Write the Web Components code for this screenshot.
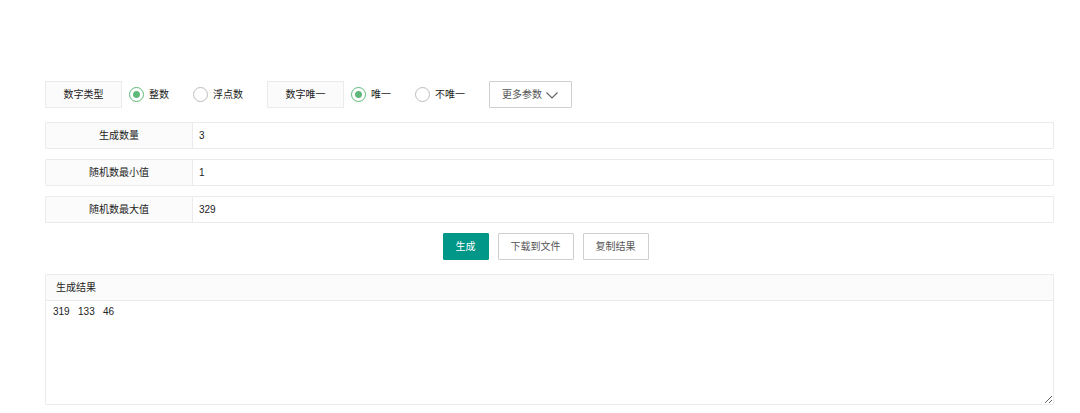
<!DOCTYPE html>
<html lang="zh-CN">
<head>
<meta charset="utf-8">
<title>随机数生成</title>
<style>
  body {
    margin: 0;
    background: #fff;
    color: #222;
    font: 10px/16px "Liberation Sans", "Noto Sans CJK SC", sans-serif;
  }
</style>
</head>
<body>
<random-page></random-page>

<template id="random-page">
  <style>
    :host { display: block; padding: 81px 26px 7px 45px; }
    form { display: flex; flex-direction: column; gap: 10px; margin: 0; }
    .options { display: flex; align-items: center; margin-bottom: 4px; }
    .actions { display: flex; justify-content: center; gap: 9px; padding-right: 8px; margin-bottom: 4px; }
    svg { width: 14px; height: 14px; fill: none; stroke: #666; stroke-width: 1.2; }
  </style>
  <form>
    <div class="options">
      <radio-group label="数字类型" options="整数,浮点数"></radio-group>
      <radio-group label="数字唯一" options="唯一,不唯一"></radio-group>
      <tool-button>更多参数<svg viewBox="0 0 14 14" aria-hidden="true"><path d="M1.5 4.5 7 10 12.500 4.5"/></svg></tool-button>
    </div>
    <text-field label="生成数量" value="3"></text-field>
    <text-field label="随机数最小值" value="1"></text-field>
    <text-field label="随机数最大值" value="329"></text-field>
    <div class="actions">
      <tool-button primary>生成</tool-button>
      <tool-button>下载到文件</tool-button>
      <tool-button>复制结果</tool-button>
    </div>
    <result-panel label="生成结果" value="319   133   46"></result-panel>
  </form>
</template>

<template id="radio-group">
  <style>
    :host { display: block; }
    fieldset { display: flex; align-items: center; border: 0; margin: 0; padding: 0; min-width: 0; }
    .title {
      box-sizing: border-box; width: 77px; height: 27px; margin-right: 7px;
      border: 1px solid #ebebeb; background: #fbfbfb;
      line-height: 25px; text-align: center;
    }
    label { display: flex; align-items: center; gap: 5px; margin-right: 24px; cursor: pointer; }
    input {
      appearance: none; box-sizing: border-box; width: 15px; height: 15px; margin: 0;
      border: 1px solid #bdbdbd; border-radius: 50%; background: #fff;
    }
    input:checked {
      border-color: #5fb878;
      background: radial-gradient(circle, #5fb878 0 3px, #fff 4px);
    }
  </style>
  <fieldset><div class="title"></div></fieldset>
</template>

<template id="tool-button">
  <style>
    :host { display: block; }
    button {
      display: flex; align-items: center; gap: 3px; box-sizing: border-box; height: 27px;
      margin: 0; padding: 0 12px; border: 1px solid #cfcfcf; border-radius: 1px;
      background: #fff; color: #555; font: inherit; cursor: pointer;
    }
    :host([primary]) button { border-color: #009688; background: #009688; color: #fff; }
  </style>
  <button type="button"><slot></slot></button>
</template>

<template id="text-field">
  <style>
    :host {
      display: flex; box-sizing: border-box; height: 27px;
      border: 1px solid #ebebeb; border-radius: 1px;
    }
    label {
      box-sizing: border-box; width: 147px; border-right: 1px solid #ebebeb;
      background: #fbfbfb; line-height: 25px; text-align: center;
    }
    input {
      flex: 1; min-width: 0; margin: 0; padding: 0 6px; border: 0; outline: 0;
      background: #fff; color: inherit; font: inherit;
    }
  </style>
  <label for="field"></label><input id="field" type="text">
</template>

<template id="result-panel">
  <style>
    :host { display: flex; flex-direction: column; border: 1px solid #ebebeb; border-radius: 1px; }
    label {
      padding: 0 10px; border-bottom: 1px solid #ebebeb;
      background: #fbfbfb; line-height: 25px;
    }
    textarea {
      display: block; box-sizing: border-box; width: 100%; height: 103px; margin: 0;
      padding: 3px 7px; border: 0; outline: 0; resize: vertical;
      background: #fff; color: inherit; font: inherit;
    }
  </style>
  <label for="result"></label><textarea id="result"></textarea>
</template>

<script>
  class TemplateElement extends HTMLElement {
    constructor() {
      super();
      const template = document.getElementById(this.localName);
      this.attachShadow({ mode: "open" }).append(template.content.cloneNode(true));
    }
  }

  class RadioGroup extends TemplateElement {
    connectedCallback() {
      const fieldset = this.shadowRoot.querySelector("fieldset");
      if (fieldset.querySelector("input")) return;
      const title = this.getAttribute("label");
      fieldset.setAttribute("aria-label", title);
      fieldset.querySelector(".title").textContent = title;
      this.getAttribute("options").split(",").forEach((text, index) => {
        const label = document.createElement("label");
        const input = document.createElement("input");
        input.type = "radio";
        input.name = "choice";
        input.value = text;
        input.checked = index === 0;
        label.append(input, text);
        fieldset.append(label);
      });
    }
  }

  class LabelledField extends TemplateElement {
    connectedCallback() {
      this.shadowRoot.querySelector("label").textContent = this.getAttribute("label");
      this.shadowRoot.querySelector("input, textarea").value = this.getAttribute("value");
    }
  }

  customElements.define("radio-group", RadioGroup);
  customElements.define("tool-button", class extends TemplateElement {});
  customElements.define("text-field", class extends LabelledField {});
  customElements.define("result-panel", class extends LabelledField {});
  customElements.define("random-page", class extends TemplateElement {});
</script>
</body>
</html>
